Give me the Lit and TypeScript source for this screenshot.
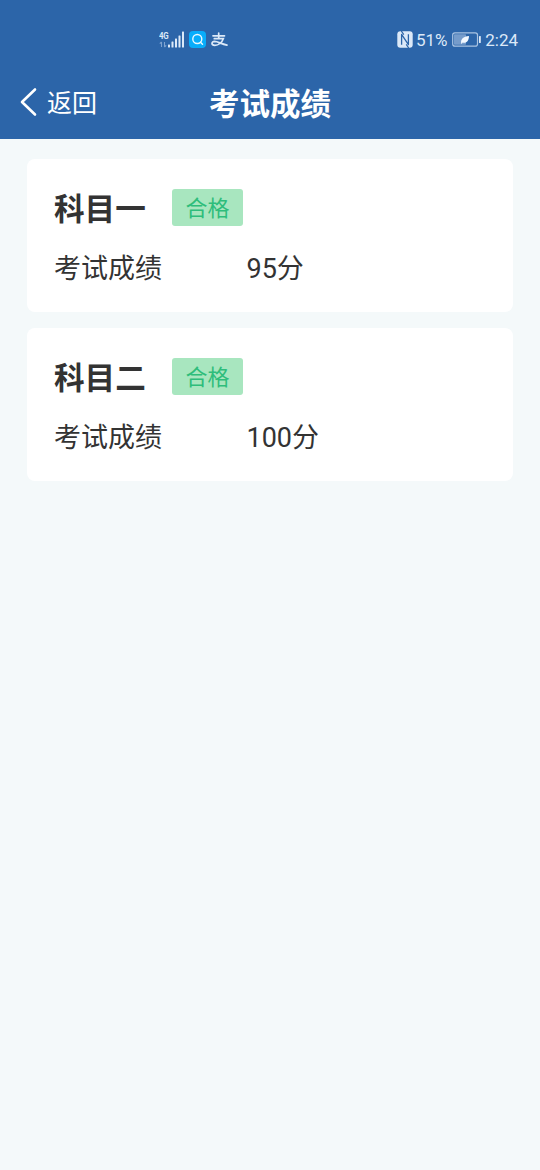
import { LitElement, html, css, svg } from "lit";
import { customElement, property } from "lit/decorators.js";

@customElement("status-bar")
class StatusBar extends LitElement {
  static styles = css`
    :host { display: flex; justify-content: space-between; height: 66px; padding: 24px 22px 0 158px; box-sizing: border-box; color: #dce9f8; font-family: Roboto, sans-serif; }
    .group { display: flex; align-items: center; height: 31px; }
    svg { display: block; flex: none; }
    .network { display: flex; flex-direction: column; width: 10px; height: 17px; }
    .gen { font-size: 9.500px; font-weight: 700; line-height: 9px; letter-spacing: -0.3px; transform: scaleX(0.83); transform-origin: left; white-space: nowrap; margin-left: 0.500px; }
    .search { margin-left: 5px; }
    .pay { margin-left: 5px; }
    .text { font-size: 17px; line-height: 31px; padding-top: 1px; }
    .percent { margin-left: 3px; letter-spacing: -0.15px; }
    .battery { margin-left: 5px; }
    .time { margin-left: 4px; }
  `;
  render() {
    return html`
      <div class="group">
        <div class="network">
          <span class="gen">4G</span>
          <svg width="10" height="8" viewBox="0 0 10 8" fill="none" stroke="#7fa3d0" stroke-width="1.1">
            <path d="M3.500 7V2M1.800 3.700L3.500 2M6.500 2v5M8.200 5.300L6.500 7" />
          </svg>
        </div>
        <svg width="16" height="17" viewBox="0 0 16 17" fill="#dce9f8">
          ${[[0, 3], [3.5, 6], [7, 9], [10.5, 12], [14, 16]].map(
            ([x, h]) => svg`<rect x=${x} y=${16.5 - h} width="2" height=${h} rx=".5" />`
          )}
        </svg>
        <svg class="search" width="17" height="17" viewBox="0 0 17 17">
          <rect width="17" height="17" rx="4" fill="#08adfb" />
          <circle cx="8.300" cy="8" r="4.500" fill="none" stroke="#e9f8ff" stroke-width="1.400" />
          <path d="M11.500 11.300l2 2" stroke="#e9f8ff" stroke-width="1.400" stroke-linecap="round" />
        </svg>
        <svg class="pay" width="17" height="15" viewBox="0 0 17 15" fill="none" stroke="#dce9f8" stroke-width="1.700" stroke-linecap="round">
          <path d="M2 3.800h11.500M7.700 1v5.500M3.300 6.700h9C11 10.300 7.500 13.300 3.800 13.300c-3.600 0-3.800-3.800-.3-3.900 3.500 0 6.500 2.600 12.500 3.700" />
        </svg>
      </div>
      <div class="group">
        <svg width="16" height="17" viewBox="0 0 16 17" fill="none">
          <rect x=".3" y=".3" width="15.400" height="16.400" rx="3" fill="#dce9f8" />
          <path d="M4.600 13.800V3.400l6.800 10.200V3.200" stroke="#2c65a9" stroke-width="1.300" stroke-linejoin="round" />
          <path d="M4.300 0l2.500 3.600M9.200 13.400l2.500 3.600" stroke="#2c65a9" stroke-width="1.200" />
        </svg>
        <span class="text percent">51%</span>
        <svg class="battery" width="29" height="15" viewBox="0 0 29 15">
          <rect x=".7" y=".9" width="24.800" height="13.200" rx="2.200" fill="none" stroke="#a9c3e2" stroke-width="1.200" />
          <rect x="2" y="2.200" width="12" height="10.600" rx=".7" fill="#769ccb" />
          <path d="M9.200 11.500c-.8-4.500 2-7 7.800-7.600-.1 5-2.500 7.600-6.300 6.600L9.500 12z" fill="#f2f8ff" />
          <rect x="27" y="4" width="1.800" height="7" rx=".6" fill="#dce9f8" />
        </svg>
        <span class="text time">2:24</span>
      </div>
    `;
  }
}

@customElement("score-card")
class ScoreCard extends LitElement {
  @property() subject = "";
  @property() result = "";
  @property() score = "";
  static styles = css`
    :host { display: block; box-sizing: border-box; height: 152.500px; padding: 30px 27px 0; border-radius: 8px; background: #fff; color: #333; }
    .head { display: flex; align-items: flex-start; height: 37px; }
    .subject { width: 118.500px; font-size: 30.600px; font-weight: 700; line-height: 37px; padding-top: 2px; margin-right: -0.500px; }
    .badge { width: 71px; height: 36.500px; border-radius: 3px; background: #a8e6bf; color: #2ebd7b; font-size: 22px; line-height: 39px; text-align: center; }
    .row { display: flex; margin-top: 22.500px; font-size: 27px; line-height: 40px; }
    .label { width: 192.500px; }
  `;
  render() {
    return html`
      <div class="head"><span class="subject">${this.subject}</span><span class="badge">${this.result}</span></div>
      <div class="row"><span class="label">考试成绩</span><span>${this.score}分</span></div>
    `;
  }
}

@customElement("app-root")
class AppRoot extends LitElement {
  static styles = css`
    :host { display: block; min-height: 1170px; background: #f4f9fa; font-family: Roboto, "Noto Sans CJK SC", sans-serif; }
    .top { height: 139px; background: #2c65a9; color: #fff; }
    .nav { display: grid; grid-template-columns: 1fr auto 1fr; align-items: center; height: 73px; padding: 0 20px; }
    .back { display: flex; align-items: center; gap: 9px; font-size: 25px; line-height: 36px; }
    .back svg { margin-bottom: 2px; }
    .back span { padding-top: 3px; }
    .title { font-size: 30.500px; font-weight: 700; line-height: 40px; padding-top: 4px; }
    .list { display: flex; flex-direction: column; gap: 16.500px; padding: 20px 27px; }
  `;
  render() {
    return html`
      <div class="top">
        <status-bar></status-bar>
        <div class="nav">
          <div class="back">
            <svg width="18" height="30" viewBox="0 0 18 30" fill="none" stroke="#fff" stroke-width="2.600" stroke-linecap="round" stroke-linejoin="round"><path d="M15 2.500L2 15l13 12.500" /></svg>
            <span>返回</span>
          </div>
          <div class="title">考试成绩</div>
        </div>
      </div>
      <div class="list">
        <score-card subject="科目一" result="合格" score="95"></score-card>
        <score-card subject="科目二" result="合格" score="100"></score-card>
      </div>
    `;
  }
}
